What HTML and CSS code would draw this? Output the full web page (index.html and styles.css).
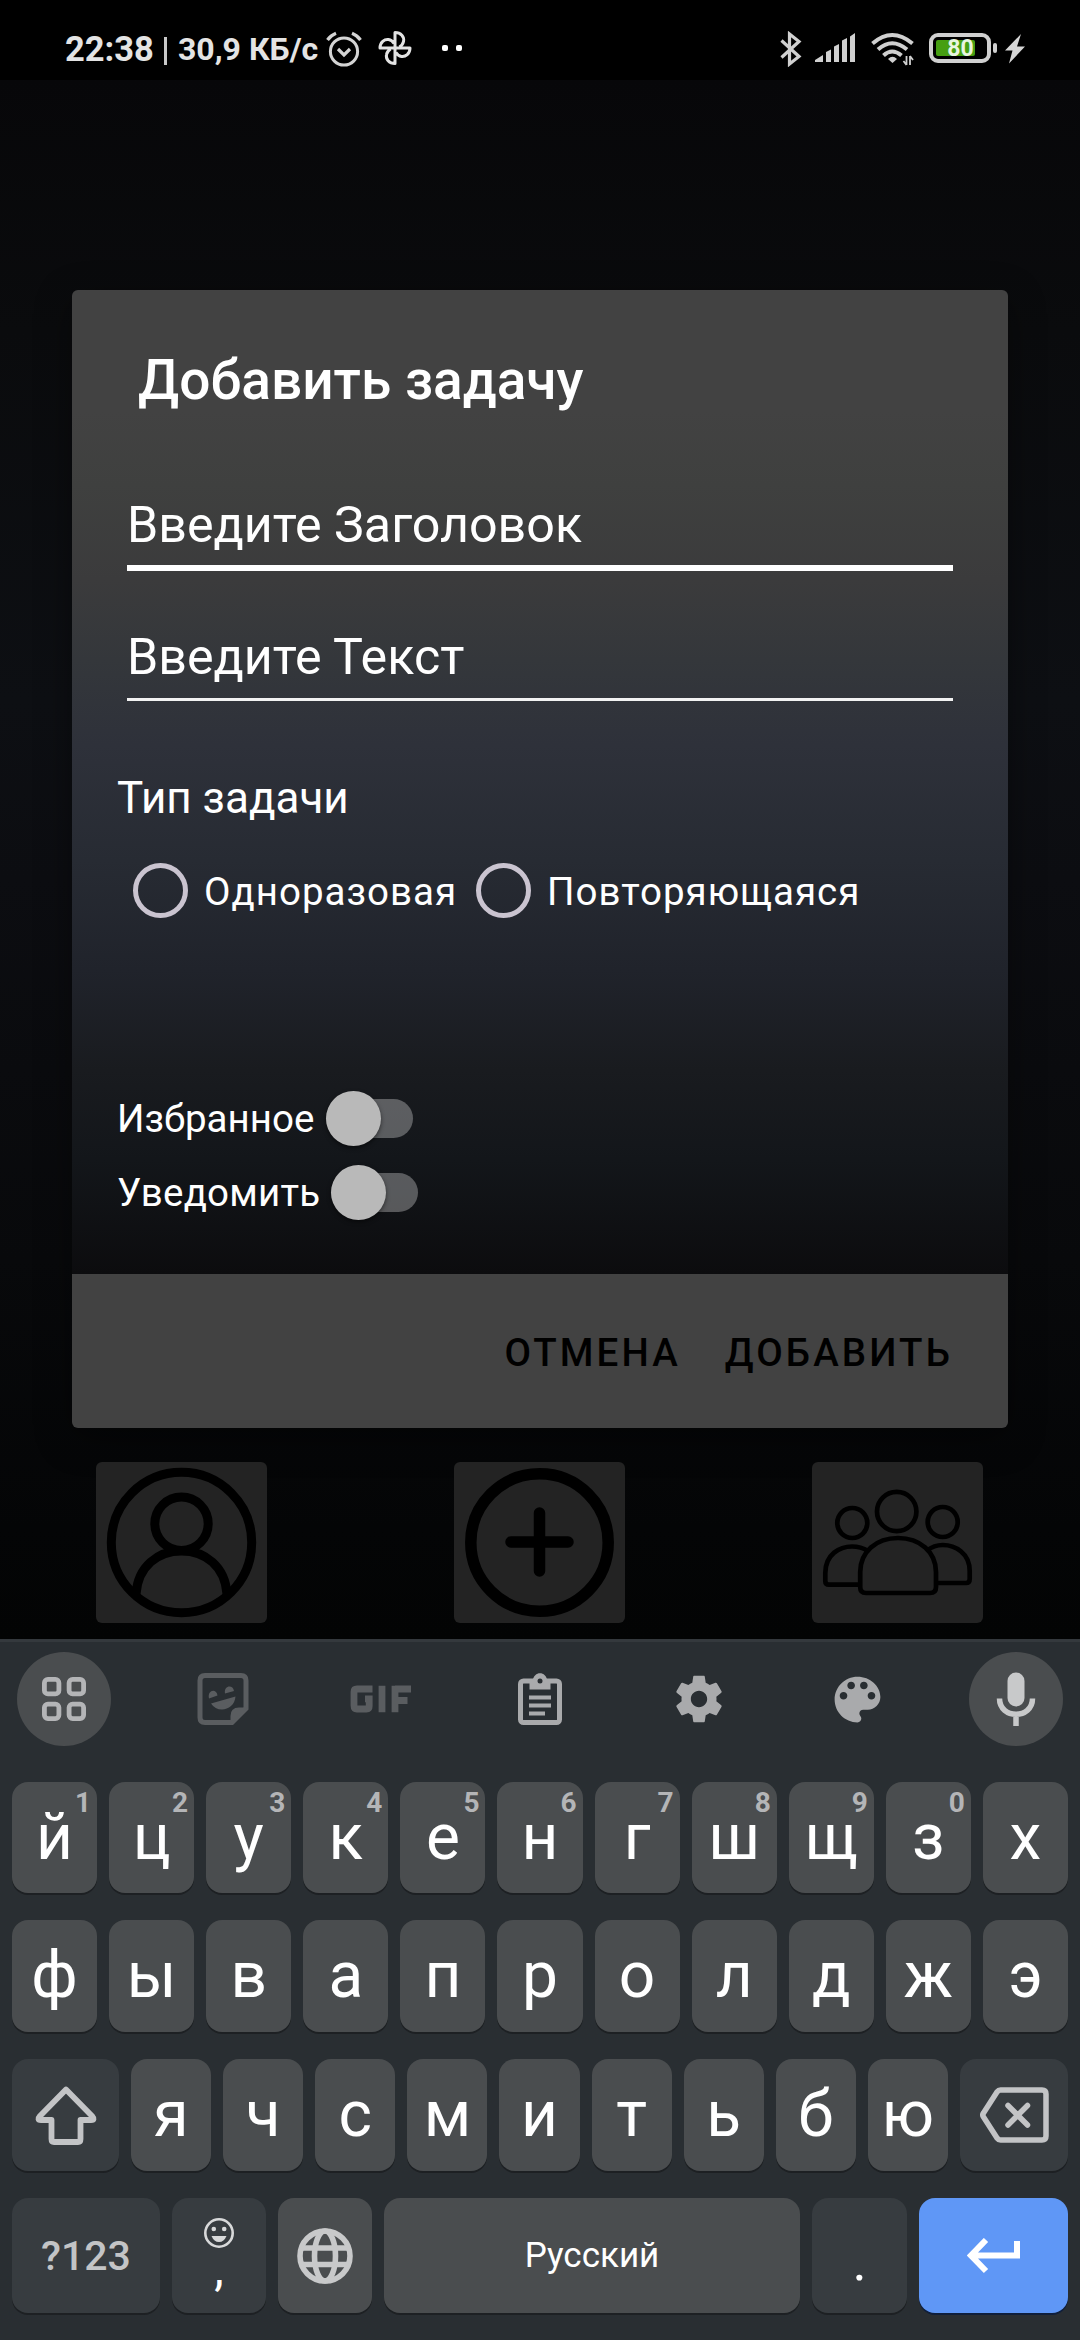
FILE: index.html
```html
<!DOCTYPE html>
<html lang="ru">
<head>
<meta charset="utf-8">
<title>Добавить задачу</title>
<link rel="stylesheet" href="styles.css">
</head>
<body>
<header class="status">
  <span class="clock">22:38</span>
  <span class="bar"></span>
  <span class="speed">30,9 КБ/с</span>
  <svg class="alarm" width="36" height="36" viewBox="0 0 36 36" fill="none" stroke="#d4d4d4" stroke-width="3"><circle cx="18" cy="20.5" r="13.6"/><path d="M1.500 9 Q4.500 4.500 10 2.200M34.500 9 Q31.500 4.500 26 2.200M12 18l6 6 6-6" stroke-width="3.200"/></svg>
  <svg class="fan" width="34" height="36" viewBox="-17 -18 34 36" fill="none" stroke="#e4e4e4" stroke-width="3" stroke-linejoin="round"><path d="M0 0V-15.500C6 -15.500 9.500 -11 8.500 -6.500Q8 -3.500 4.500 -1M0 0H15C15 6 10.500 9 6.500 8.500Q3 8 1 4.500M0 0V15.500C-6 15.500 -9.500 11 -8.500 6.500Q-8 3.500 -4.500 1M0 0H-15C-15 -6 -10.500 -9 -6.500 -8.500Q-3 -8 -1 -4.500"/></svg>
  <span class="dots"><i></i><i></i></span>
  <span class="spacer"></span>
  <svg class="bt" width="22" height="36" viewBox="0 0 22 36" fill="none" stroke="#d0d0d0" stroke-width="3.200"><path d="M1.500 9.500L19 25.500 9.500 33V3L19 10.500 1.500 26.500"/></svg>
  <svg class="signal" width="41" height="30" viewBox="0 0 41 30" fill="#d0d0d0"><path d="M0 29v-2l8-5v7zM11 29V19l5-2.500V29zM19 29V13.500l5-2.500V29zM27 29V7.500l5-2.500V29zM35 29V3.500L40 0V29z"/></svg>
  <svg class="wifi" width="44" height="35" viewBox="0 0 44 35" fill="none" stroke="#d0d0d0" stroke-width="4"><path d="M1.500 11.500Q21 -5.500 41.500 11.500M7 17.500Q21 5 36 17.500M12.500 23.500Q21 15.500 30.500 23.500"/><path d="M17 27q4.500-4.500 9 0l-4.500 4z" fill="#d0d0d0" stroke="none"/><path d="M35.500 24V33M35.500 33l-3-4M39 24v9M39 24l3 4" stroke-width="1.800"/></svg>
  <div class="battery"><span class="charge"></span><span class="pct">80</span></div>
  <span class="nub"></span>
  <svg class="bolt" width="20" height="30" viewBox="0 0 20 30" fill="#d6d6d6"><path d="M16 0L0 16.500H7.500L4 29.500 20 12.500H12z"/></svg>
</header>

<main class="app">
  <section class="dialog">
    <div class="form">
      <h1 class="title">Добавить задачу</h1>
      <div class="field active">Введите Заголовок</div>
      <div class="field">Введите Текст</div>
      <h2 class="label">Тип задачи</h2>
      <div class="radios">
        <span class="ring"></span><span class="radio-text once">Одноразовая</span>
        <span class="ring second"></span><span class="radio-text">Повторяющаяся</span>
      </div>
      <div class="toggle first"><span class="name">Избранное</span><span class="track"><i class="thumb"></i></span></div>
      <div class="toggle"><span class="name notify">Уведомить</span><span class="track"><i class="thumb"></i></span></div>
    </div>
    <div class="actions"><span>Отмена</span><span>Добавить</span></div>
  </section>
  <nav class="tiles">
    <div class="tile"><svg width="171" height="161" viewBox="0 0 171 161" fill="none" stroke="#000" stroke-width="9"><circle cx="85.5" cy="80.5" r="70.2"/><circle cx="85.500" cy="61.700" r="26.700"/><path d="M40 132C42 104 62 89 85.500 89S129 104 131 132"/></svg></div>
    <div class="tile"><svg width="171" height="161" viewBox="0 0 171 161" fill="none" stroke="#000" stroke-width="11.500" stroke-linecap="round"><circle cx="85.500" cy="80.500" r="68.700"/><path d="M57 80h57M85.500 51v58"/></svg></div>
    <div class="tile"><svg width="171" height="161" viewBox="0 0 171 161" fill="none" stroke="#000" stroke-width="4.700"><circle cx="84.700" cy="49.500" r="19.700"/><circle cx="40.300" cy="61" r="15"/><circle cx="130.700" cy="60" r="15"/><path d="M48.200 114V110C48.200 90 64 76 86 76S124 90 124 110V125Q124 131 118 131H54Q48.200 131 48.200 125zM48 122.700H17Q13.300 122.700 13.300 119V111C13.300 92 28 84.500 40 84.500Q49 84.500 56 89M124 121H154Q157.700 121 157.700 117V109C157.700 91 143 83 130.700 83Q122 83 115 88.500"/></svg></div>
  </nav>
</main>

<section class="keyboard">
  <div class="tools">
    <div class="tool round"><svg width="46" height="46" viewBox="0 0 46 46" fill="none" stroke="#b4b5b7" stroke-width="4.800"><rect x="3.400" y="3.400" width="14.500" height="14.500" rx="3.500"/><rect x="28.100" y="3.400" width="14.500" height="14.500" rx="3.500"/><rect x="3.400" y="28.100" width="14.500" height="14.500" rx="3.500"/><rect x="28.100" y="28.100" width="14.500" height="14.500" rx="3.500"/></svg></div>
    <div class="tool"><svg width="52" height="52" viewBox="0 0 52 52"><path d="M8 2.500H44Q49 2.500 49 7.500V35.500L35 49.500H8Q3 49.500 3 44.500V7.500Q3 2.500 8 2.500z" fill="none" stroke="#5a5d60" stroke-width="5"/><path d="M33.500 51V43Q33.500 34.500 42 34.500H51zM14 30.500L38.500 23.500C38 31.500 31.500 36.500 25 36.500Q18 36.500 14 30.500zM12 25.500C10 17 19.500 15 20.500 22.500zM28 20.500C26.500 12.500 36 11 37 18z" fill="#5a5d60"/></svg></div>
    <div class="tool gif"><svg width="62" height="28" viewBox="0 0 62 28" fill="none" stroke="#5a5d60" stroke-width="6.800"><path d="M22.500 4H7Q4 4 4 7V20.500Q4 24 7 24H16.500Q19.200 24 19.200 21V13.800H15M32 .7V27.300M45 27.300V.7M45 4H61M45 15.500H57.500"/></svg></div>
    <div class="tool"><svg width="44" height="52" viewBox="0 0 44 52" fill="none" stroke="#a9aaac"><rect x="2.500" y="8" width="39" height="41.500" rx="3" stroke-width="5"/><path d="M11.500 16.500V8H14.500C16 -2.500 28 -2.500 29.500 8H32.500V16.500z" fill="#a9aaac" stroke="none"/><circle cx="22" cy="8" r="2.500" fill="#292e32" stroke="none"/><path d="M11 24.500H33M11 32.500H33M11 40.500H27" stroke-width="4.200"/></svg></div>
    <div class="tool"><svg width="56" height="56" viewBox="0 0 24 24" fill="#a9aaac"><path d="M19.430 12.980c.04-.32.070-.64.070-.98s-.03-.66-.07-.98l2.110-1.650c.19-.15.240-.42.120-.64l-2-3.460c-.12-.22-.39-.3-.61-.22l-2.490 1c-.52-.4-1.080-.73-1.690-.98l-.38-2.650C14.460 2.180 14.250 2 14 2h-4c-.25 0-.46.180-.49.420l-.38 2.650c-.61.250-1.170.590-1.690.980l-2.490-1c-.23-.09-.49 0-.61.220l-2 3.460c-.13.220-.07.490.120.640l2.110 1.650c-.04.320-.07.650-.07.980s.03.660.070.980l-2.110 1.650c-.19.150-.24.420-.12.640l2 3.460c.12.220.39.300.61.220l2.490-1c.52.400 1.080.730 1.690.980l.38 2.650c.03.240.24.420.49.420h4c.25 0 .46-.18.490-.42l.38-2.650c.61-.25 1.170-.59 1.690-.98l2.490 1c.23.090.49 0 .61-.22l2-3.460c.12-.22.070-.49-.12-.64l-2.110-1.650zM12 15.500c-1.930 0-3.500-1.570-3.500-3.500s1.570-3.500 3.500-3.500 3.500 1.570 3.500 3.500-1.570 3.500-3.500 3.500z"/></svg></div>
    <div class="tool"><svg width="61" height="61" viewBox="0 0 24 24" fill="#a9aaac"><path d="M12 3c-4.970 0-9 4.030-9 9s4.030 9 9 9c.83 0 1.500-.67 1.500-1.500 0-.39-.15-.74-.39-1.010-.23-.26-.38-.61-.38-.99 0-.83.67-1.500 1.500-1.500H16c2.760 0 5-2.240 5-5 0-4.420-4.030-8-9-8zm-5.500 9c-.83 0-1.500-.67-1.500-1.500S5.670 9 6.500 9 8 9.670 8 10.500 7.330 12 6.500 12zm3-4C8.670 8 8 7.330 8 6.500S8.670 5 9.500 5s1.500.67 1.500 1.500S10.330 8 9.500 8zm5 0c-.83 0-1.500-.67-1.500-1.500S13.670 5 14.500 5s1.500.67 1.500 1.500S15.330 8 14.500 8zm3 4c-.83 0-1.500-.67-1.500-1.500S16.670 9 17.500 9s1.500.67 1.500 1.500-.67 1.500-1.500 1.500z"/></svg></div>
    <div class="tool round"><svg width="40" height="54" viewBox="0 0 40 54" fill="none" stroke="#c8c9ca"><path d="M20 9V26" stroke-width="17" stroke-linecap="round"/><path d="M3.500 26.500C3.500 47.500 36.500 47.500 36.500 26.500M20 43V54" stroke-width="5.500"/></svg></div>
  </div>

  <div class="keys letters top">
    <div class="key">й<sup>1</sup></div><div class="key">ц<sup>2</sup></div><div class="key">у<sup>3</sup></div><div class="key">к<sup>4</sup></div><div class="key">е<sup>5</sup></div><div class="key">н<sup>6</sup></div><div class="key">г<sup>7</sup></div><div class="key">ш<sup>8</sup></div><div class="key">щ<sup>9</sup></div><div class="key">з<sup>0</sup></div><div class="key">х</div>
  </div>
  <div class="keys letters">
    <div class="key">ф</div><div class="key">ы</div><div class="key">в</div><div class="key">а</div><div class="key">п</div><div class="key">р</div><div class="key">о</div><div class="key">л</div><div class="key">д</div><div class="key">ж</div><div class="key">э</div>
  </div>
  <div class="keys third">
    <div class="key dark"><svg width="62" height="60" viewBox="0 0 62 60" fill="none" stroke="#c3c4c6" stroke-width="5.800" stroke-linejoin="round"><path d="M31 4.500L57 31Q60.500 35 56 35H45.500V54Q45.500 57 43 57H19Q16.500 57 16.500 54V35H6Q1.500 35 5 31z"/></svg></div>
    <div class="key">я</div><div class="key">ч</div><div class="key">с</div><div class="key">м</div><div class="key">и</div><div class="key">т</div><div class="key">ь</div><div class="key">б</div><div class="key">ю</div>
    <div class="key dark"><svg class="erase" width="70" height="56" viewBox="0 0 70 56" fill="none" stroke="#c3c4c6" stroke-width="5.500" stroke-linejoin="round"><path d="M21.500 3H63Q67 3 67 7V49Q67 53 63 53H21.500Q19.500 53 18 51L4.500 30Q3 28 4.500 26L18 5Q19.500 3 21.500 3z"/><path d="M29 18.500L48.500 38M48.500 18.500L29 38" stroke-linecap="round"/></svg></div>
  </div>
  <div class="keys last">
    <div class="key dark num">?123</div>
    <div class="key dark comma"><svg width="32" height="32" viewBox="0 0 32 32"><circle cx="16" cy="16" r="13.700" fill="none" stroke="#d8d9da" stroke-width="2.600"/><g fill="#d8d9da"><circle cx="10.800" cy="12" r="2.300"/><circle cx="21.200" cy="12" r="2.300"/><path d="M8.500 19h15Q21 25 16 25T8.500 19z"/></g></svg><span>,</span></div>
    <div class="key"><svg width="56" height="56" viewBox="0 0 56 56" fill="none" stroke="#c8c9ca" stroke-width="5.600"><circle cx="28" cy="28" r="25"/><ellipse cx="28" cy="28" rx="10.500" ry="25"/><path d="M4 20H52M4 36.500H52"/></svg></div>
    <div class="key space">Русский</div>
    <div class="key dark dot">.</div>
    <div class="key enter"><svg width="54" height="36" viewBox="0 0 54 36" fill="none" stroke="#fff" stroke-width="6"><path d="M50 3V17.500H5M19 2L4 17.500 19 33"/></svg></div>
  </div>
</section>
</body>
</html>
```

FILE: styles.css
```css
* { box-sizing: border-box; }
body {
  margin: 0;
  width: 1080px;
  height: 2340px;
  display: flex;
  flex-direction: column;
  background: #000;
  color: #fff;
  font-family: Roboto, "Noto Sans", sans-serif;
  overflow: hidden;
}
svg { display: block; flex: none; }

/* status bar */
.status {
  height: 80px;
  flex: none;
  display: flex;
  align-items: flex-start;
  padding: 31px 55px 0 65px;
  color: #e4e4e4;
  font-weight: 700;
  white-space: nowrap;
}
.clock { font-size: 34.5px; line-height: 36px; width: 89px; }
.bar { width: 3px; height: 28px; margin: 6px 0 0 10px; background: #c8c8c8; }
.speed { font-size: 32px; line-height: 36px; margin-left: 11px; width: 140px; }
.alarm { margin-left: 8px; }
.fan { margin-left: 16px; margin-top: -1px; }
.dots { display: flex; gap: 8px; margin: 14px 0 0 30px; }
.dots i { width: 6px; height: 6px; border-radius: 2px; background: #fff; }
.spacer { flex: 1; }
.signal { margin: 2px 0 0 13px; }
.wifi { margin: 1px 0 0 15px; }
.battery {
  width: 62px;
  height: 30px;
  margin: 2px 0 0 14px;
  border: 4px solid #d0d0d0;
  border-radius: 9px;
  padding: 3px;
  display: grid;
}
.battery > * { grid-area: 1 / 1; }
.charge { width: 39px; height: 16px; border-radius: 2px; background: #469f12; }
.pct { font-size: 23px; line-height: 17px; text-align: center; color: #e8f5e0; padding-left: 1px; }
.nub { width: 4px; height: 10px; margin: 12px 0 0 2px; border-radius: 2px; background: #d0d0d0; }
.bolt { margin: 3px 0 0 8px; }

/* dimmed screen behind the dialog */
.app {
  height: 1559px;
  flex: none;
  padding: 210px 72px 0;
  background: linear-gradient(#070709 0, #0a0b0d 250px, #0d0f13 620px, #0c0d11 800px, #08090b 1180px, #040506 1450px, #030404 100%);
}
.dialog {
  height: 1138px;
  border-radius: 6px;
  overflow: hidden;
  box-shadow: 0 10px 36px rgba(0, 0, 0, .4);
}
.form {
  height: 984px;
  padding: 56px 45px 0;
  background: linear-gradient(#424242 0, #424242 120px, #3f403f 195px, #3b3b3c 290px, #34373b 370px, #2e313a 455px, #272b33 570px, #20232b 680px, #191b1f 780px, #13161a 870px, #0c0c0e 100%);
}
.title { margin: 0 0 0 21px; font-size: 55px; line-height: 68px; font-weight: 500; white-space: nowrap; }
.field {
  height: 132px;
  margin: 25px 10px 0;
  font-size: 50.200px;
  line-height: 70px;
  padding: 51px 4px 0 0;
  border-bottom: 3px solid #f2f2f2;
}
.field.active { border-bottom: 6px solid #fff; }
.field:not(.active) { margin-top: -2px; padding-top: 53px; }
.label { margin: 67px 0 0; font-size: 44px; line-height: 60px; font-weight: 400; }
.radios { display: flex; align-items: center; height: 56px; margin: 34px 0 0 16px; font-size: 38.500px; letter-spacing: 1px; }
.ring { width: 55px; height: 55px; flex: none; border: 5.500px solid #cac4d0; border-radius: 50%; }
.ring.second { margin-left: 18px; }
.radio-text { margin: 3px 0 0 16px; line-height: 46px; white-space: nowrap; }
.once { width: 254px; }
.toggle { display: flex; align-items: center; height: 74px; font-size: 38.500px; }
.toggle.first { margin-top: 163px; }
.name { line-height: 46px; width: 209px; padding-top: 2px; white-space: nowrap; }
.name.notify { width: 214px; letter-spacing: .2px; }
.track { width: 87px; height: 39px; border-radius: 20px; background: rgba(255, 255, 255, .3); }
.thumb { display: block; width: 55px; height: 55px; margin: -8px 0 0 0; border-radius: 50%; background: #b9b9b9; box-shadow: 0 2px 4px rgba(0, 0, 0, .5); }
.actions {
  height: 154px;
  display: flex;
  justify-content: flex-end;
  align-items: center;
  gap: 44px;
  padding: 3px 55px 0 0;
  background: #424242;
  color: #000;
  font-size: 38.500px;
  font-weight: 500;
  letter-spacing: 3.100px;
  text-transform: uppercase;
}
.tiles { display: flex; justify-content: space-between; padding: 0 25px 0 24px; margin-top: 34px; }
.tile { width: 171px; height: 161px; border-radius: 6px; background: #232323; }

/* on-screen keyboard */
.keyboard { flex: 1; border-top: 3px solid #34393d; background: #292e32; padding: 0 12px; }
.tools {
  height: 114px;
  margin-bottom: 26px;
  display: flex;
  justify-content: space-between;
  align-items: center;
  padding: 0 5px;
}
.tool { width: 94px; height: 94px; display: flex; align-items: center; justify-content: center; }
.round { border-radius: 50%; background: #4a4d4f; }
.keys { display: grid; column-gap: 12px; height: 112px; margin-bottom: 27px; font-size: 64px; }
.keys.top { height: 111px; }
.letters { grid-template-columns: repeat(11, 1fr); }
.third { grid-template-columns: 107px repeat(9, 1fr) 108px; }
.last { grid-template-columns: 148px 94px 94px 416px 95px 149px; height: 115px; margin-bottom: 0; }
.key {
  position: relative;
  display: flex;
  align-items: center;
  justify-content: center;
  min-width: 0;
  border-radius: 16px;
  background: #4a4d4f;
  box-shadow: 0 2px 0 #1d2023;
  line-height: 110px;
}
.key.dark { background: #373c40; }
.key sup { position: absolute; top: 10px; right: 6px; font-size: 28px; line-height: 21px; font-weight: 700; color: #b4b5b7; }
.key.num { font-size: 41px; font-weight: 500; color: #c3c4c6; }
.key.space { font-size: 35px; }
.key.comma { flex-direction: column; justify-content: flex-start; padding-top: 19px; font-size: 48px; }
.comma span { line-height: 48px; margin-top: -4px; }
.key.dot { font-size: 54px; line-height: 48px; padding-top: 12px; }
.key.enter { background: #5f97f6; box-shadow: 0 2px 0 #101f3b; }
```
